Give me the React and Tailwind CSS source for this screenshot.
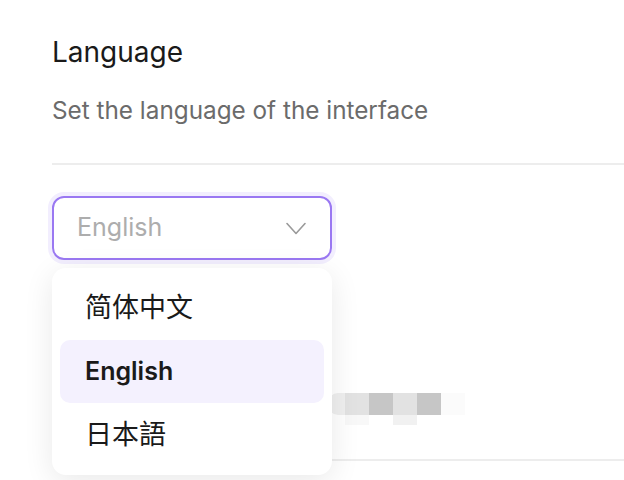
import React from "react";

function Chevron() {
  return (
    <svg width="20" height="13" viewBox="0 0 20 13" fill="none">
      <path d="M1 1.5 L10 11.5 L19 1.5" stroke="#9a9a9a" strokeWidth="1.6" strokeLinecap="round" strokeLinejoin="round" />
    </svg>
  );
}

function Mosaic() {
  return (
    <div className="flex flex-col">
      <div className="flex h-[22px]">
        <div className="w-[17px] bg-[#efefef] rounded-l-[10px]" />
        <div className="w-[24px] bg-[#e2e2e2]" />
        <div className="w-[24px] bg-[#c6c6c6]" />
        <div className="w-[24px] bg-[#e2e2e2]" />
        <div className="w-[24px] bg-[#c6c6c6]" />
        <div className="w-[24px] bg-[#fbfbfb]" />
      </div>
      <div className="flex h-[10px]">
        <div className="w-[17px]" />
        <div className="w-[24px] bg-[#f8f8f8]" />
        <div className="w-[24px]" />
        <div className="w-[24px] bg-[#f1f1f1]" />
      </div>
    </div>
  );
}

export default function App() {
  const font = { fontFamily: "Inter, 'Noto Sans CJK SC', sans-serif" };
  return (
    <div className="w-[624px] h-[480px] overflow-hidden bg-white relative" style={font}>
      <div className="pl-[52px] pt-[34px]">
        <div className="text-[28px] leading-[36px] text-[#1a1a1a]">Language</div>
        <div className="mt-[24px] text-[24.3px] leading-[32px] text-[#6b6b6b]">Set the language of the interface</div>
        <div className="mt-[37px] h-[2px] bg-[#ededed]" />
        <div className="mt-[31px] relative w-[280px]">
          <div className="h-[64px] rounded-[12px] border-2 border-[#9a78f2] ring-4 ring-[#f2eefe] flex items-center justify-between pl-[23px] pr-[24px]">
            <span className="text-[25px] text-[#adadad]">English</span>
            <Chevron />
          </div>
        </div>
        <div className="mt-[133px] ml-[276px]">
          <Mosaic />
        </div>
        <div className="mt-[34px] h-[2px] bg-[#ededed]" />
      </div>
      <div className="absolute left-[52px] top-[268px] w-[280px] h-[207px] bg-white rounded-[14px] shadow-[0_6px_30px_rgba(0,0,0,0.09)] p-[8px] flex flex-col">
        <div className="h-[64px] flex items-center pl-[25px] text-[27px] text-[#1a1a1a]">简体中文</div>
        <div className="h-[63px] flex items-center pl-[25px] text-[25px] font-semibold text-[#1a1a1a] bg-[#f4f1fe] rounded-[10px]">English</div>
        <div className="h-[64px] flex items-center pl-[25px] text-[27px] text-[#1a1a1a]">日本語</div>
      </div>
    </div>
  );
}
